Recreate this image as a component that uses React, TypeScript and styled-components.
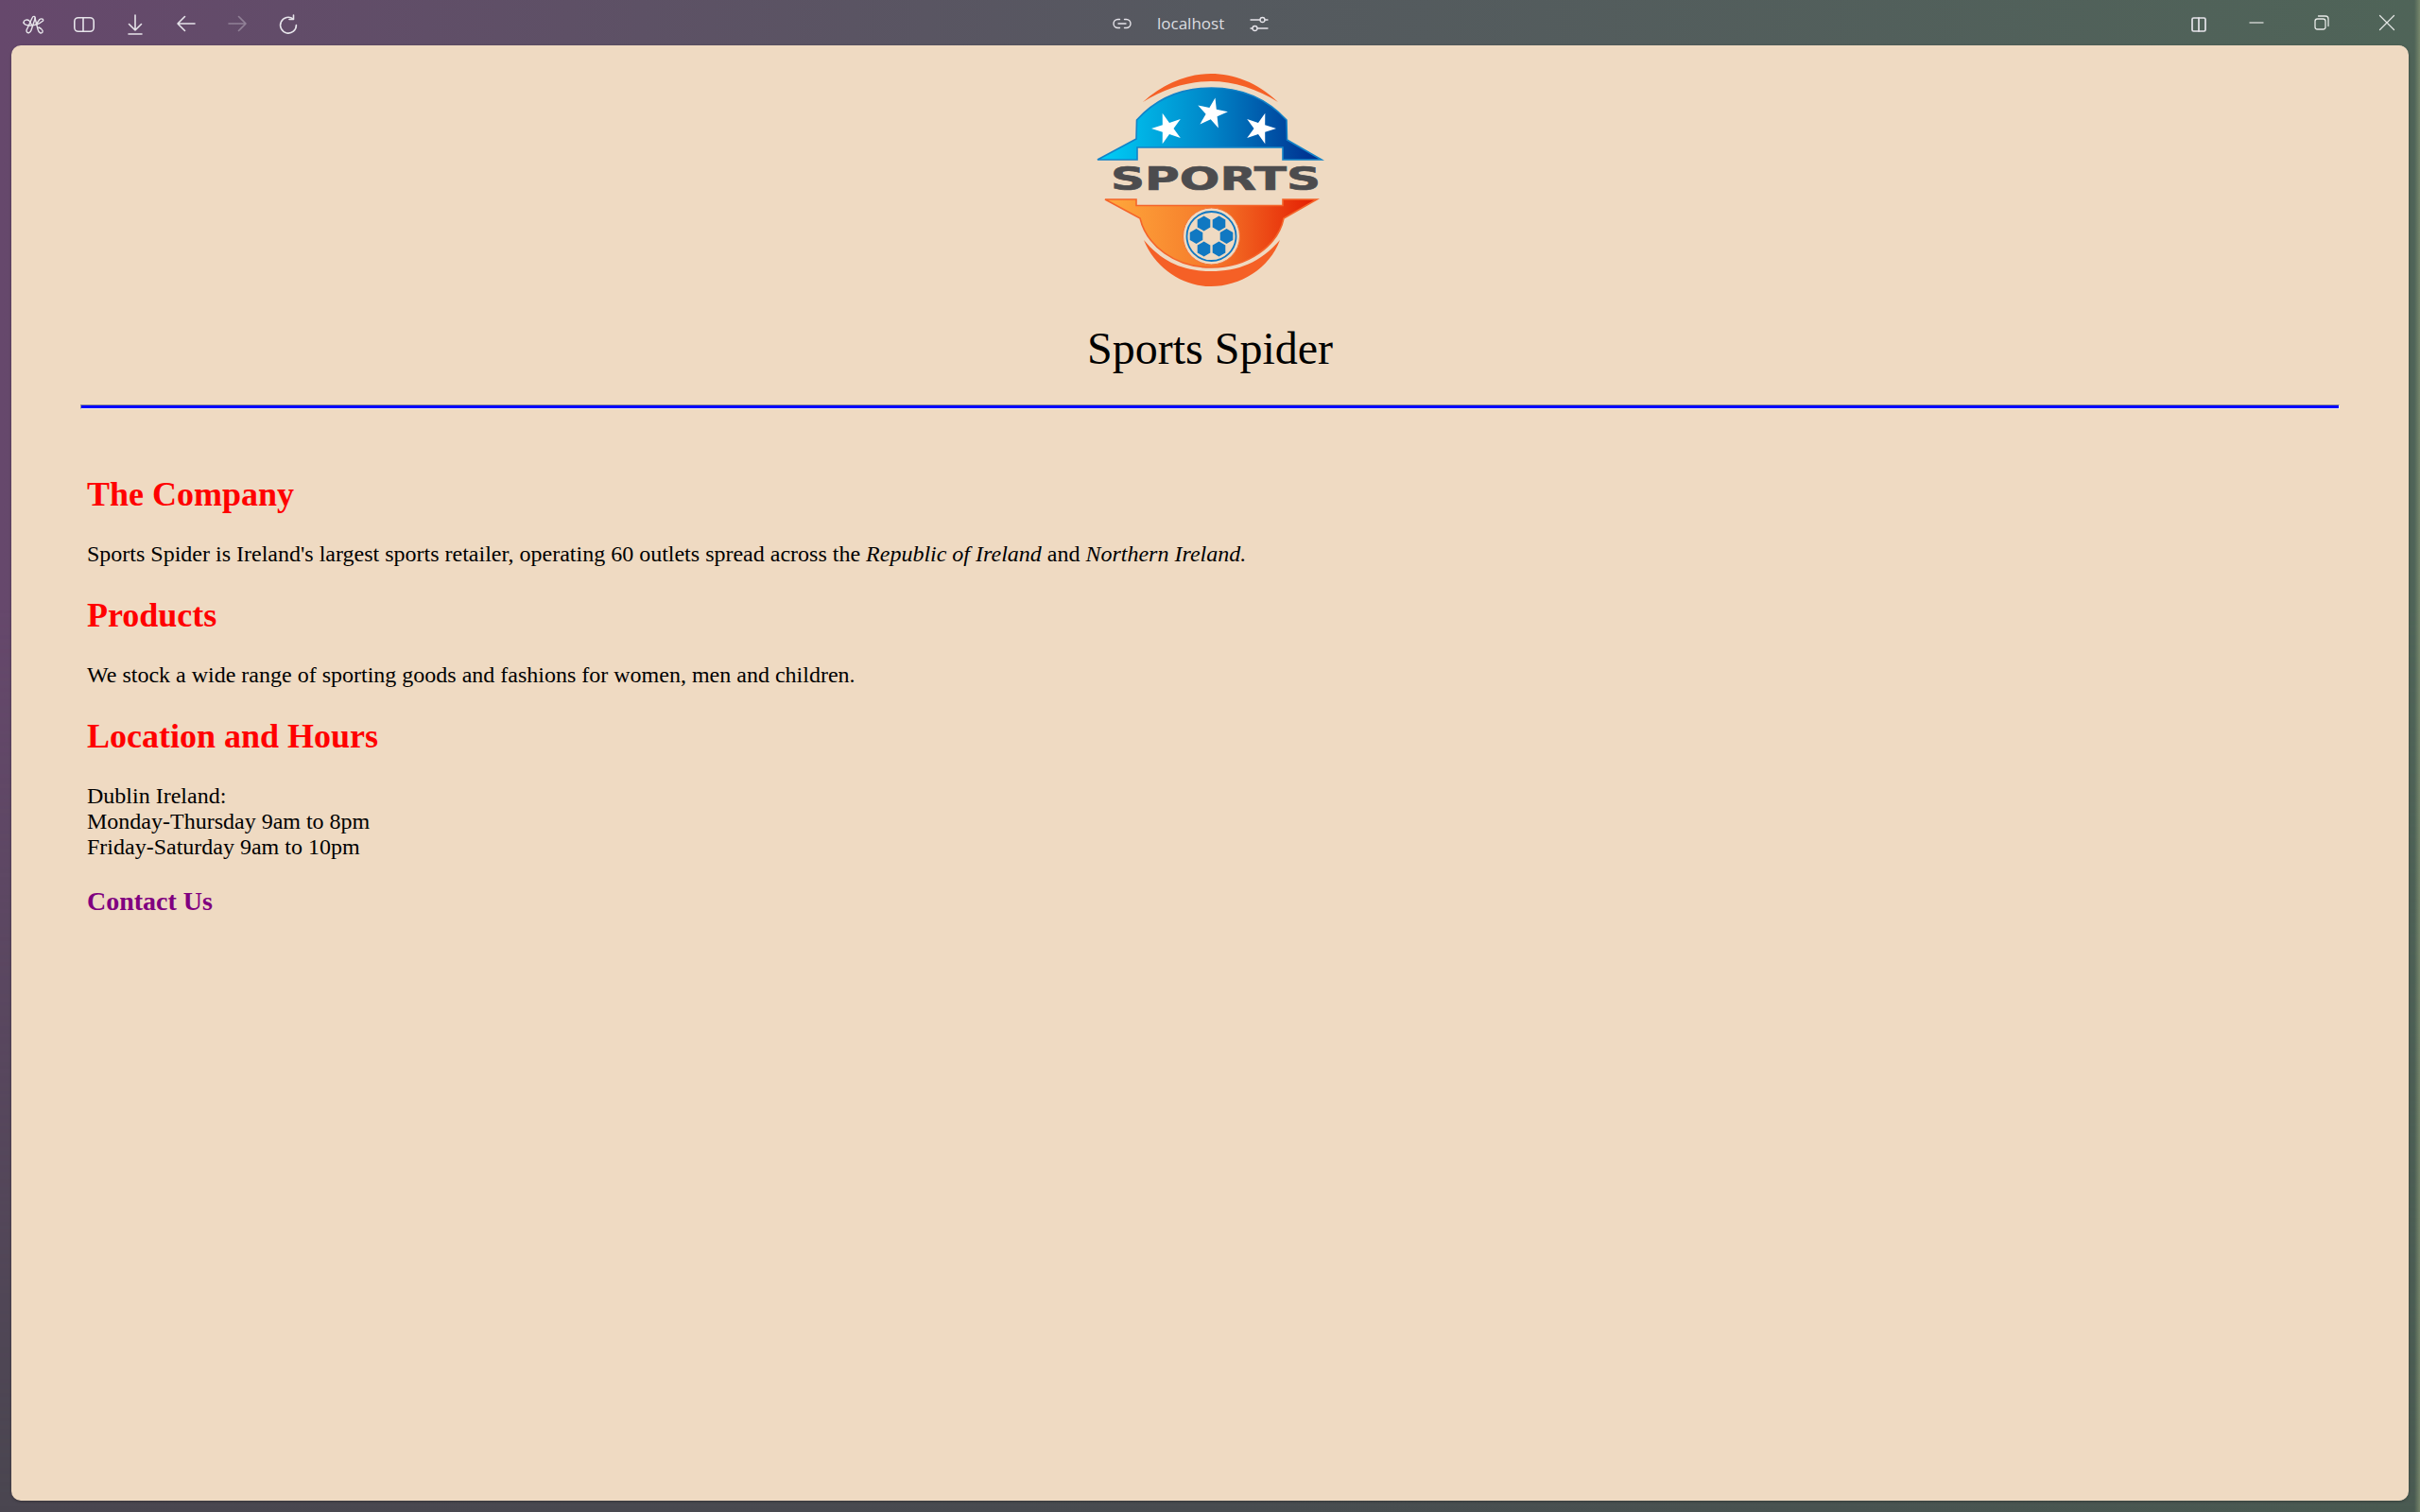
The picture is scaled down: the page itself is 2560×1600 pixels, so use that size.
import React from "react";
import styled, { createGlobalStyle } from "styled-components";

const Global = createGlobalStyle`
  html, body { margin: 0; padding: 0; height: 100%; }
  #root { height: 100%; }
`;

const Shell = styled.div`
  width: 2560px;
  height: 1600px;
  display: flex;
  flex-direction: column;
  overflow: hidden;
  position: relative;
  isolation: isolate;
  background: linear-gradient(90deg, #4a4650 0%, #484c50 50%, #4a5b52 100%);

  &::before {
    content: "";
    position: absolute;
    inset: 0;
    z-index: -1;
    background: linear-gradient(90deg, #66486c 0%, #55595f 50%, #4f6458 100%);
    -webkit-mask-image: linear-gradient(180deg, #000 0%, #000 40%, transparent 100%);
    mask-image: linear-gradient(180deg, #000 0%, #000 40%, transparent 100%);
  }

  &::after {
    content: "";
    position: absolute;
    top: 0;
    right: 0;
    bottom: 0;
    width: 6px;
    z-index: -1;
    background: linear-gradient(90deg, transparent, rgba(135, 150, 115, 0.7));
  }
`;

const TopBar = styled.header`
  height: 48px;
  box-sizing: border-box;
  padding-top: 4px;
  flex: none;
  display: grid;
  grid-template-columns: 1175px auto 1fr;
  align-items: center;
  color: #e6e4ea;
`;

const LeftTools = styled.div`
  display: flex;
  align-items: center;
  gap: 30px;
  padding-left: 23px;
`;

const AddressGroup = styled.div`
  display: flex;
  align-items: center;
  margin-top: -2px;
`;

const HostName = styled.span`
  font-family: "Open Sans", "Noto Sans", sans-serif;
  font-size: 17px;
  line-height: 24px;
  color: #dcdde0;
  margin: 0 25px 0 25px;
`;

const RightTools = styled.div`
  display: flex;
  align-items: center;
  justify-content: flex-end;
  padding-right: 1px;
`;

const IconBox = styled.span<{ $dim?: boolean; $trail?: number }>`
  width: 24px;
  height: 24px;
  flex: none;
  display: flex;
  align-items: center;
  justify-content: center;
  opacity: ${(p) => (p.$dim ? 0.35 : 1)};
  margin-right: ${(p) => p.$trail ?? 0}px;
  svg { display: block; }
`;

const WindowButton = styled.span`
  width: 69px;
  height: 24px;
  margin-top: -5px;
  display: flex;
  align-items: center;
  justify-content: center;
  color: #e6e8e6;
`;

const Card = styled.main`
  flex: 1;
  margin: 0 12px 12px;
  border-radius: 10px;
  background: #efdac2;
  box-shadow: 0 1px 3px rgba(0, 0, 0, 0.3);
  padding: 0 73px;
  color: #000;
  font-family: "Liberation Serif", "Times New Roman", serif;
  font-size: 24px;
  line-height: 27px;
`;

const Masthead = styled.div`
  display: flex;
  flex-direction: column;
  align-items: center;
`;

const LogoFrame = styled.div`
  width: 280px;
  height: 240px;
  margin-top: 22px;
  svg { display: block; }
`;

const SiteTitle = styled.h1`
  margin: 31px 0 0;
  font-size: 48px;
  line-height: 55px;
  font-weight: 400;
`;

const Rule = styled.hr`
  box-sizing: border-box;
  margin: 32px 0 0;
  height: 5px;
  background: #0000ff;
  border-style: solid;
  border-width: 1px;
  border-color: #8f8f94 #f1ede6 #f1ede6 #8f8f94;
`;

const Article = styled.article`
  padding: 0 7px;
`;

const SectionHeading = styled.h2<{ $first?: boolean }>`
  margin: ${(p) => (p.$first ? "70px" : "31px")} 0 0;
  color: #ff0000;
  font-size: 36px;
  line-height: 41px;
  font-weight: 700;
`;

const Para = styled.p`
  margin: 29px 0 0;
`;

const ContactLink = styled.a`
  display: block;
  margin-top: 28px;
  color: #800080;
  font-size: 28px;
  line-height: 32px;
  font-weight: 700;
  text-decoration: none;
`;

const Stroke = ({ children, w = 24, h = 24, sw = 1.6 }: { children: React.ReactNode; w?: number; h?: number; sw?: number }) => (
  <svg width={w} height={h} viewBox={`0 0 ${w} ${h}`} fill="none" stroke="currentColor" strokeWidth={sw} strokeLinecap="round" strokeLinejoin="round">
    {children}
  </svg>
);

const star = (cx: number, cy: number, R: number, rot: number) => {
  const pts: string[] = [];
  for (let i = 0; i < 10; i++) {
    const r = i % 2 === 0 ? R : R * 0.38;
    const a = ((rot + i * 36 - 90) * Math.PI) / 180;
    pts.push(`${(cx + r * Math.cos(a)).toFixed(1)},${(cy + r * Math.sin(a)).toFixed(1)}`);
  }
  return pts.join(" ");
};

const hex = (cx: number, cy: number, r: number) => {
  const pts: string[] = [];
  for (let i = 0; i < 6; i++) {
    const a = ((i * 60 - 90) * Math.PI) / 180;
    pts.push(`${(cx + r * Math.cos(a)).toFixed(1)},${(cy + r * Math.sin(a)).toFixed(1)}`);
  }
  return pts.join(" ");
};

const Logo = () => (
  <svg width={280} height={240} viewBox="0 0 280 240">
    <defs>
      <linearGradient id="cap" x1="0" x2="1" y1="0" y2="0">
        <stop offset="0" stopColor="#00d0f8" />
        <stop offset="0.5" stopColor="#0086c8" />
        <stop offset="1" stopColor="#002a8c" />
      </linearGradient>
      <linearGradient id="base" x1="0" x2="1" y1="0" y2="0">
        <stop offset="0" stopColor="#ffa93c" />
        <stop offset="0.5" stopColor="#f57a2a" />
        <stop offset="1" stopColor="#e41c02" />
      </linearGradient>
    </defs>
    <path d="M69 38 C92 17 117 8 141 8 C165 8 190 17 212 38 C190 24 165 16 141 16 C117 16 92 24 69 38Z" fill="#f56026" />
    <path
      d="M21 99 L62 77 L62.5 57 C85 32 112 23 141.5 23 C171 23 198 32 221 57 L221.5 78 L258 99 L217 99 L217 86 L63 86 L63 99 Z"
      fill="url(#cap)"
      stroke="#1283c8"
      strokeWidth={1.6}
      strokeLinejoin="miter"
    />
    <polygon points={star(95, 66, 17, -18)} fill="#fff" />
    <polygon points={star(142, 50, 17, 12)} fill="#fff" />
    <polygon points={star(193, 66, 17, 18)} fill="#fff" />
    <text x="35" y="130.5" fontFamily="'DejaVu Sans', sans-serif" fontWeight="700" fontSize="34" fill="#4c4c4e" stroke="#4c4c4e" strokeWidth="0.7" textLength="222" lengthAdjust="spacingAndGlyphs">
      SPORTS
    </text>
    <path
      d="M29 141 L62 141 L62 147.5 L217 147.5 L217 141 L253 141 L218 161 C212 190 180 213 141.5 213 C103 213 73 190 66 161 Z"
      fill="url(#base)"
      stroke="#f4642a"
      strokeWidth={1.6}
    />
    <path d="M70 184 C90 208 113 217 141 217 C170 217 193 208 214 184 C203 214 172 233 141 233 C111 233 82 214 70 184Z" fill="#f56026" />
    <circle cx="141.5" cy="180" r="30" fill="#efdac2" stroke="#f4743a" strokeWidth={1} />
    <circle cx="141.5" cy="180" r="26" fill="none" stroke="#1078c2" strokeWidth={1.8} />
    <polygon points={hex(133.5, 166.5, 7.9)} fill="#1078c2" />
    <polygon points={hex(149.5, 166.5, 7.9)} fill="#1078c2" />
    <polygon points={hex(125.5, 180, 7.9)} fill="#1078c2" />
    <polygon points={hex(157.5, 180, 7.9)} fill="#1078c2" />
    <polygon points={hex(133.5, 193.5, 7.9)} fill="#1078c2" />
    <polygon points={hex(149.5, 193.5, 7.9)} fill="#1078c2" />
  </svg>
);

export default function App() {
  return (
    <Shell>
      <Global />
      <TopBar>
        <LeftTools>
          <IconBox>
            <Stroke sw={1.4}>
              <path d="M2 10 C2 7 6 6 8 8 L11 13" />
              <path d="M2 10 C3 13 6 13 9 13 C13 13 19 11 22.5 8 C23.5 6.5 21 5 19 6.5 L15 12" />
              <path d="M5 19 C6 22 9 21 10 18 L14 6 C15 3 12 2.5 11 5 L6 16 C5 17 5 18 5 19" />
              <path d="M14 5 L17 17 C18 21 21 22 22 20 C23 18 20 16 18 15" />
            </Stroke>
          </IconBox>
          <IconBox>
            <Stroke>
              <rect x="1.8" y="4.7" width="20.4" height="14.6" rx="4" />
              <path d="M11 4.7 V19.3" />
            </Stroke>
          </IconBox>
          <IconBox>
            <Stroke>
              <path d="M12 2 V18 M5.5 11.5 L12 18 L18.5 11.5 M5 22 H19" />
            </Stroke>
          </IconBox>
          <IconBox>
            <Stroke>
              <path d="M21 11 H3 M10.5 3.5 L3 11 L10.5 18.5" />
            </Stroke>
          </IconBox>
          <IconBox $dim>
            <Stroke>
              <path d="M3 11 H21 M13.5 3.5 L21 11 L13.5 18.5" />
            </Stroke>
          </IconBox>
          <IconBox>
            <Stroke>
              <path d="M17.2 6.1 A8.4 8.4 0 1 0 20.4 12.5" />
              <path d="M17.5 2 V6.5 H13" />
            </Stroke>
          </IconBox>
        </LeftTools>
        <AddressGroup>
          <IconBox>
            <Stroke sw={1.4}>
              <path d="M9.5 7.5 H7.5 A4.5 4.5 0 0 0 7.5 16.5 H9.5 M14.5 7.5 H16.5 A4.5 4.5 0 0 1 16.5 16.5 H14.5 M8 12 H16" />
            </Stroke>
          </IconBox>
          <HostName>localhost</HostName>
          <IconBox>
            <Stroke sw={1.3}>
              <path d="M3 8 H13 M18 8 H21 M3 17 H5 M10 17 H21" />
              <circle cx="15.5" cy="8" r="2.5" />
              <circle cx="7.5" cy="17" r="2.5" />
            </Stroke>
          </IconBox>
        </AddressGroup>
        <RightTools>
          <IconBox $trail={14}>
            <Stroke sw={1.7}>
              <rect x="5" y="5" width="14" height="14" rx="1.5" />
              <path d="M12 5 V19" />
            </Stroke>
          </IconBox>
          <WindowButton>
            <Stroke sw={1.2}>
              <path d="M4.5 12 H19.5" strokeLinecap="butt" />
            </Stroke>
          </WindowButton>
          <WindowButton>
            <Stroke sw={1.3}>
              <rect x="5" y="8" width="11" height="11" rx="2.5" />
              <path d="M8.5 5 H16 A3 3 0 0 1 19 8 V15.5" />
            </Stroke>
          </WindowButton>
          <WindowButton>
            <Stroke sw={1.2}>
              <path d="M4.5 4.5 L19.5 19.5 M19.5 4.5 L4.5 19.5" />
            </Stroke>
          </WindowButton>
        </RightTools>
      </TopBar>
      <Card>
        <Masthead>
          <LogoFrame>
            <Logo />
          </LogoFrame>
          <SiteTitle>Sports Spider</SiteTitle>
        </Masthead>
        <Rule />
        <Article>
          <SectionHeading $first>The Company</SectionHeading>
          <Para>
            Sports Spider is Ireland's largest sports retailer, operating 60 outlets spread across the <em>Republic of Ireland</em> and <em>Northern Ireland.</em>
          </Para>
          <SectionHeading>Products</SectionHeading>
          <Para>We stock a wide range of sporting goods and fashions for women, men and children.</Para>
          <SectionHeading>Location and Hours</SectionHeading>
          <Para>
            Dublin Ireland:
            <br />
            Monday-Thursday 9am to 8pm
            <br />
            Friday-Saturday 9am to 10pm
          </Para>
          <ContactLink href="#">Contact Us</ContactLink>
        </Article>
      </Card>
    </Shell>
  );
}
